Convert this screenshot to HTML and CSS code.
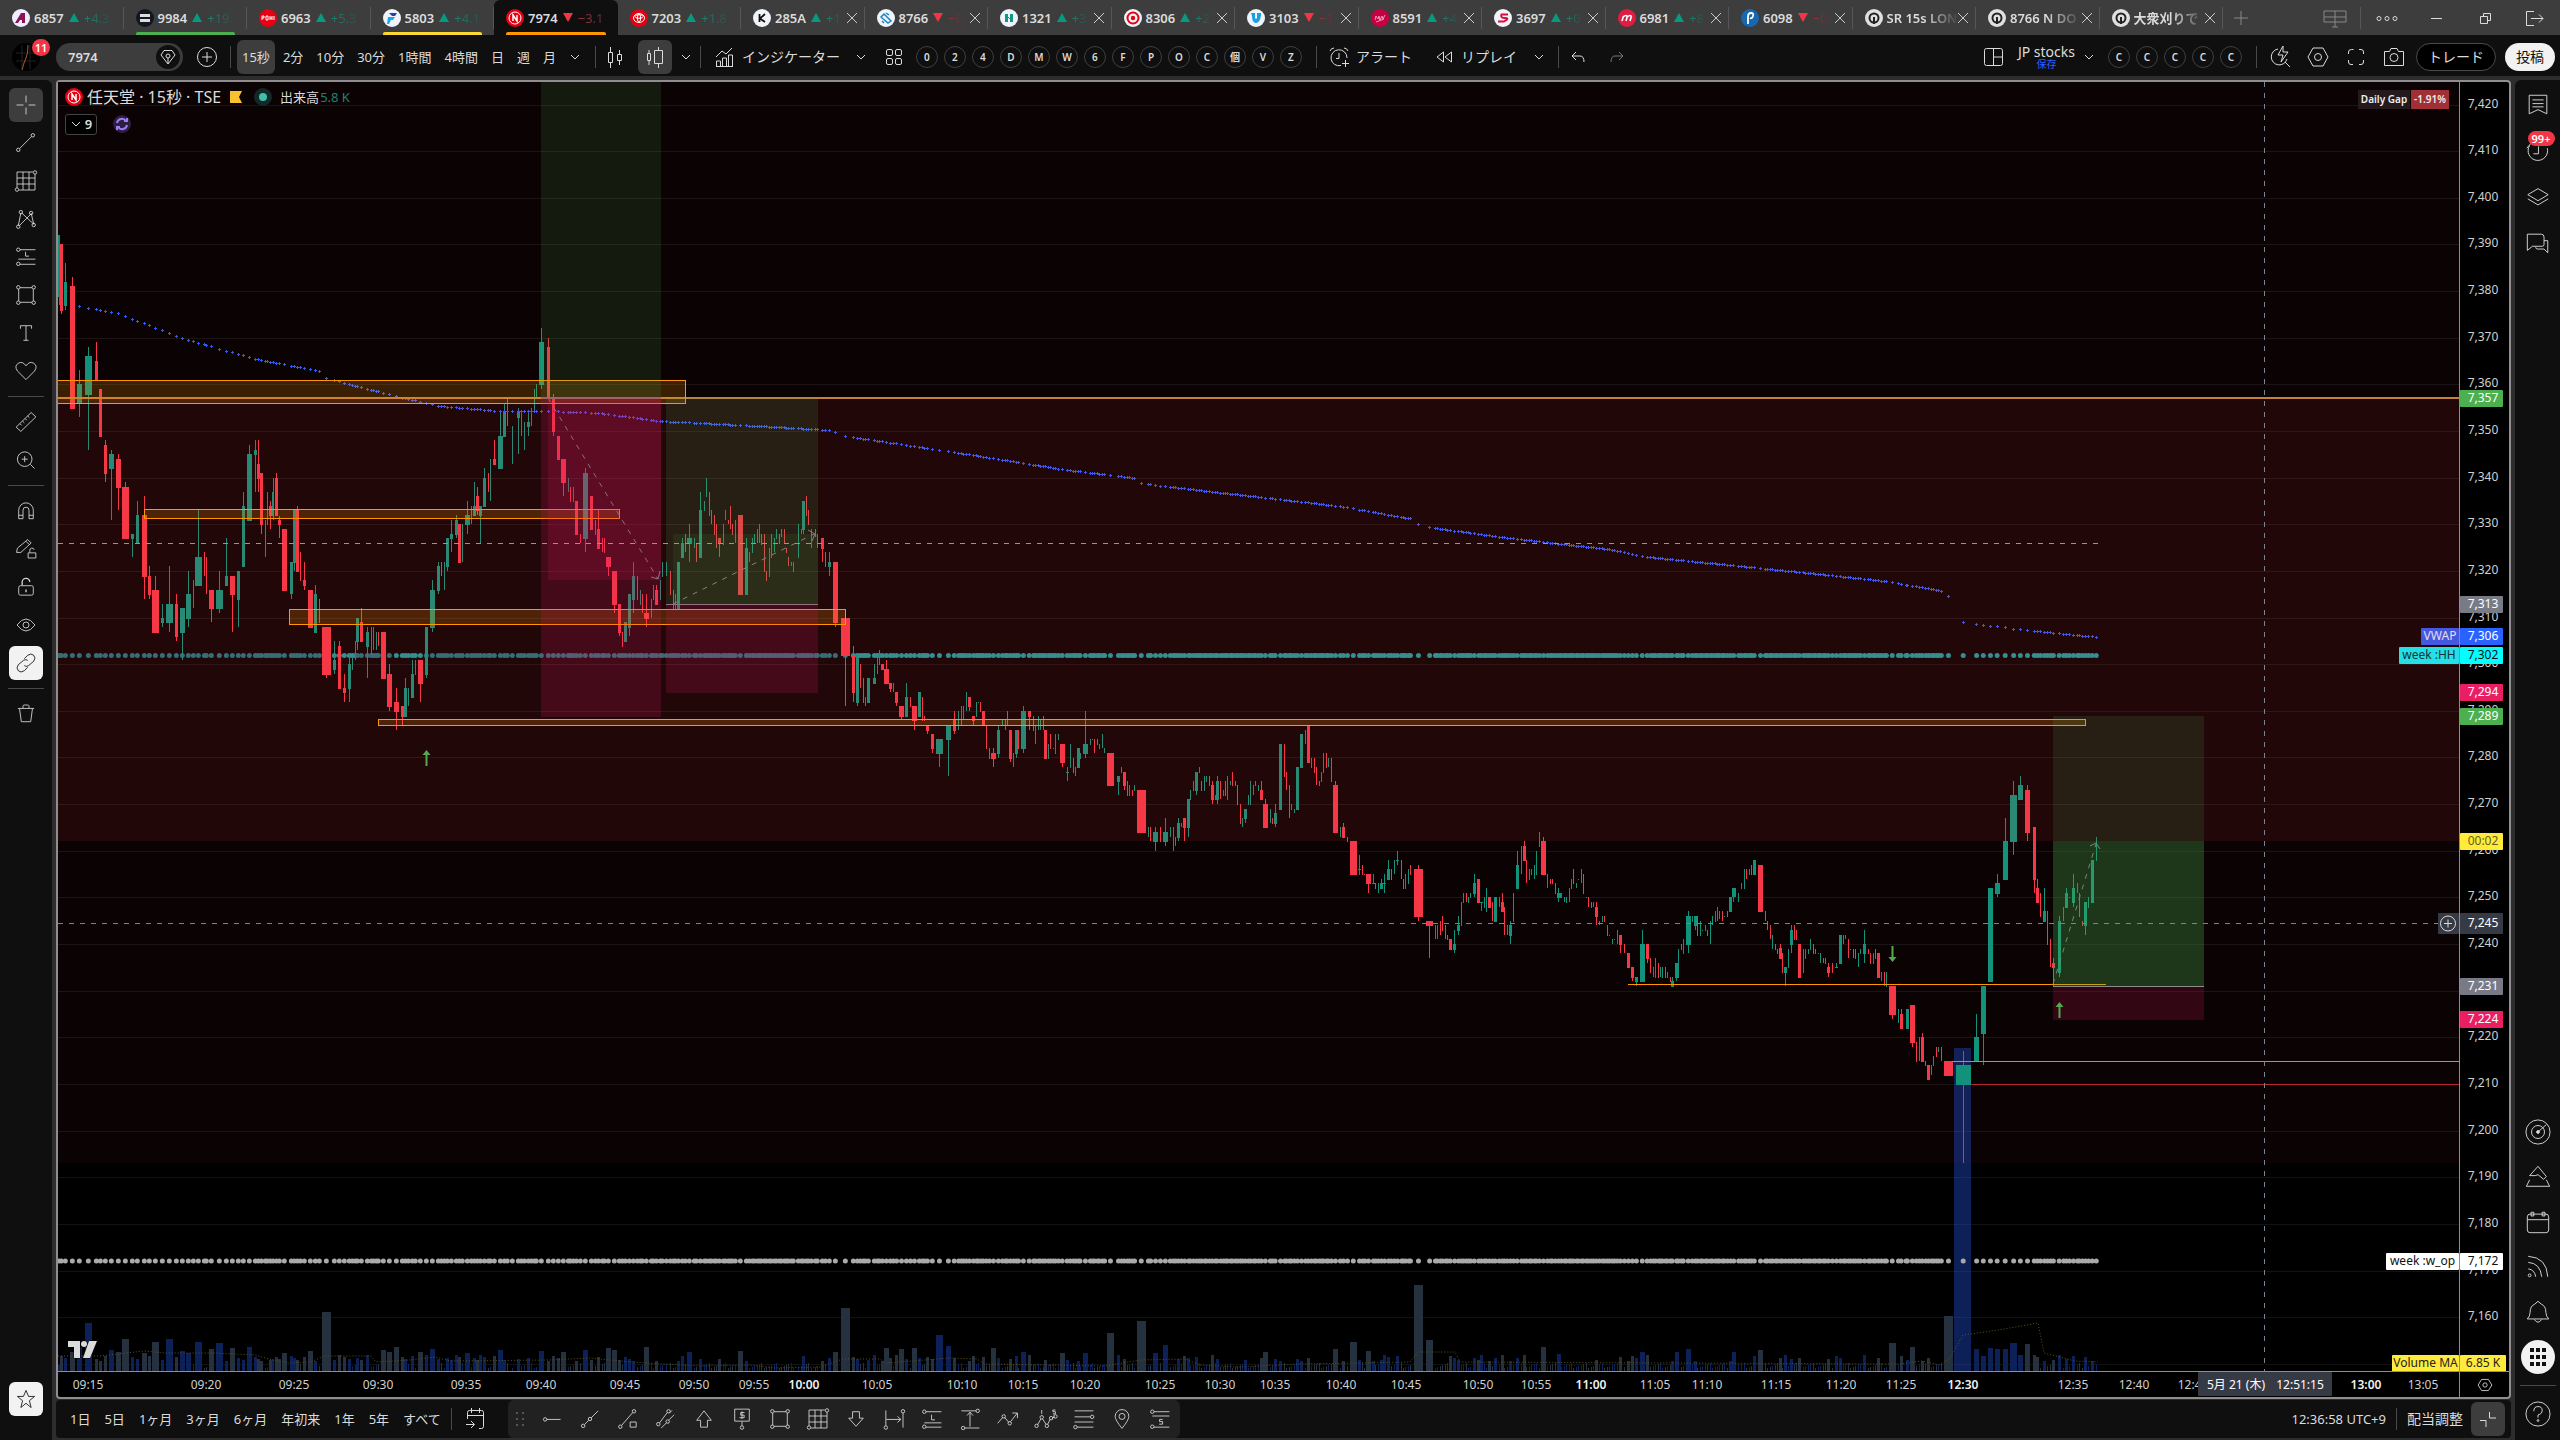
FILE: index.html
```html
<!DOCTYPE html>
<html lang="ja">
<head>
<meta charset="utf-8">
<title>7974 任天堂 15秒</title>
<link rel="stylesheet" href="styles.css">
</head>
<body>
<header class="tabs">
  <nav class="tabstrip">
    <a class="tab" href="#"><span class="logo" style="background:#eef"><svg viewBox="0 0 18 18"><path d="M3 14L9 4h4v10h-3v-3H8l-2 3z" fill="#8a1550"/></svg></span><b>6857</b><i class="up"></i><em class="g">+4.3</em></a>
    <a class="tab mark-green" href="#"><span class="logo dark"><svg viewBox="0 0 18 18"><path d="M4 5h10v3H4zM4 10h10v3H4z" fill="#ddd"/></svg></span><b>9984</b><i class="up"></i><em class="g">+19.</em></a>
    <a class="tab" href="#"><span class="logo red"><svg viewBox="0 0 18 18"><path d="M3 7v4M3 7h2v2H3M7 7h2v4H7zM11 7v4M13 7v4M11 9h2M15 7v4" fill="none" stroke="#fff"/></svg></span><b>6963</b><i class="up"></i><em class="g">+5.3</em></a>
    <a class="tab mark-yellow" href="#"><span class="logo white"><svg viewBox="0 0 18 18"><path d="M6 4h8l-2 3H9z" fill="#1747a6"/><path d="M5 8h7l-2 3H8l-2 4H4z" fill="#1ba7ee"/></svg></span><b>5803</b><i class="up"></i><em class="g">+4.1</em></a>
    <a class="tab active mark-orange" href="#" aria-current="page"><span class="logo red"><svg viewBox="0 0 18 18"><circle cx="9" cy="9" r="6" fill="none" stroke="#fff"/><path d="M7 12V6l4 6V6" fill="none" stroke="#fff" stroke-width="1.5"/></svg></span><b>7974</b><i class="down"></i><em class="r">−3.1</em></a>
    <a class="tab" href="#"><span class="logo red"><svg viewBox="0 0 18 18"><ellipse cx="9" cy="9" rx="5.500" ry="4.500" fill="none" stroke="#fff"/><ellipse cx="9" cy="7.500" rx="4" ry="1.800" fill="none" stroke="#fff"/><ellipse cx="9" cy="9" rx="1.600" ry="4" fill="none" stroke="#fff"/></svg></span><b>7203</b><i class="up"></i><em class="g">+1.8</em></a>
    <a class="tab x" href="#"><span class="logo white"><svg viewBox="0 0 18 18"><path d="M6.500 5v8M12 5L7 9.500 12 13" fill="none" stroke="#111" stroke-width="1.800"/></svg></span><b>285A</b><i class="up"></i><em class="g">+1</em></a>
    <a class="tab x" href="#"><span class="logo white"><svg viewBox="0 0 18 18"><path d="M4 8l3-3 7 7-3 2zM5 12l2 2M9 4l3 2" fill="none" stroke="#178ac9" stroke-width="1.500"/></svg></span><b>8766</b><i class="down"></i><em class="r">−0</em></a>
    <a class="tab x" href="#"><span class="logo white"><svg viewBox="0 0 18 18"><path d="M5 5h3v8H5zM10 5h3v8h-3z" fill="#0a9c83"/><path d="M7 7l4 4" stroke="#0a9c83"/></svg></span><b>1321</b><i class="up"></i><em class="g">+3</em></a>
    <a class="tab x" href="#"><span class="logo white"><svg viewBox="0 0 18 18"><circle cx="9" cy="9" r="5.500" fill="none" stroke="#e60012" stroke-width="2"/><circle cx="9" cy="9" r="2.200" fill="#e60012"/></svg></span><b>8306</b><i class="up"></i><em class="g">+2</em></a>
    <a class="tab x" href="#"><span class="logo white"><svg viewBox="0 0 18 18"><path d="M4 4h4v5q1 2 2 0V4h4v2q-1 8-5 8-4 0-4-7z" fill="#17a0e6"/></svg></span><b>3103</b><i class="down"></i><em class="r">−1</em></a>
    <a class="tab x" href="#"><span class="logo" style="background:#c70044"><svg viewBox="0 0 18 18"><path d="M4 11l1-4 2 3 1-3 1 4 2-4 1 3 2-4M5 13l8-3" fill="none" stroke="#f29ab8"/></svg></span><b>8591</b><i class="up"></i><em class="g">+4</em></a>
    <a class="tab x" href="#"><span class="logo white"><svg viewBox="0 0 18 18"><path d="M14 5.500H7.500Q6 9 11 9t-1 3.500H4" fill="none" stroke="#d9103c" stroke-width="2"/></svg></span><b>3697</b><i class="up"></i><em class="g">+0</em></a>
    <a class="tab x" href="#"><span class="logo" style="background:#e01b44"><svg viewBox="0 0 18 18"><path d="M4 12l1.500-5M8 12l1.500-5M12 12l1.500-5M5 8q4-3 4 0 4-3 4.500 0" fill="none" stroke="#fff" stroke-width="1.600"/></svg></span><b>6981</b><i class="up"></i><em class="g">+8</em></a>
    <a class="tab x" href="#"><span class="logo" style="background:#1668b0"><svg viewBox="0 0 18 18"><path d="M7 15V8q0-4 3-4t2 3-3 2" fill="none" stroke="#fff" stroke-width="1.800"/></svg></span><b>6098</b><i class="down"></i><em class="r">−0</em></a>
    <a class="tab x" href="#"><span class="logo cam"><svg viewBox="0 0 18 18"><circle cx="9" cy="9" r="4.500" fill="none" stroke="#222" stroke-width="2"/><path d="M9 8v7" stroke="#222" stroke-width="2"/></svg></span><b class="long">SR 15s LON</b></a>
    <a class="tab x" href="#"><span class="logo cam"><svg viewBox="0 0 18 18"><circle cx="9" cy="9" r="4.500" fill="none" stroke="#222" stroke-width="2"/><path d="M9 8v7" stroke="#222" stroke-width="2"/></svg></span><b class="long">8766 N DO</b></a>
    <a class="tab x" href="#"><span class="logo cam"><svg viewBox="0 0 18 18"><circle cx="9" cy="9" r="4.500" fill="none" stroke="#222" stroke-width="2"/><path d="M9 8v7" stroke="#222" stroke-width="2"/></svg></span><b class="long">大衆刈りで</b></a>
  </nav>
  <div class="winctl">
    <button aria-label="新しいタブ"><svg viewBox="0 0 24 24"><path d="M12 5v14M5 12h14" stroke="#888"/></svg></button>
    <button class="push" aria-label="レイアウト"><svg viewBox="0 0 24 24"><path d="M1 5h22v11H1zM12 5v16M9 21h6M1 11h22" stroke="#888"/></svg></button>
    <span class="vline"></span>
    <button aria-label="その他"><svg viewBox="0 0 24 24"><circle cx="4" cy="12.500" r="2"/><circle cx="12" cy="12.500" r="2"/><circle cx="20" cy="12.500" r="2"/></svg></button>
    <button aria-label="最小化"><svg viewBox="0 0 24 24"><path d="M7 12.500h11"/></svg></button>
    <button aria-label="元に戻す"><svg viewBox="0 0 24 24"><path d="M7.500 10.500h7v7h-7zM10.500 10V7.500h7v7H15"/></svg></button>
    <button aria-label="閉じる"><svg viewBox="0 0 24 24"><path d="M12 5.500H4.500v14H12M9 12.500h12M17 8.500l4 4-4 4"/></svg></button>
  </div>
</header>

<div class="toolbar">
  <span class="avatar"><svg viewBox="0 0 28 28"><path d="M4 10h20M4 18h20M10 2v24M18 2v24" stroke="#222"/><path d="M10 27q2-8 4-12t2-13" stroke="#b5532a"/></svg><sup>11</sup></span>
  <label class="search"><input type="text" value="7974" aria-label="シンボル"><span class="gem"><svg viewBox="0 0 24 24"><path d="M8 5.500h8l3 4.500-7 9-7-9zM12 13v6"/><circle cx="12" cy="11" r="2"/></svg></span></label>
  <button class="ic add" aria-label="比較"><svg viewBox="0 0 28 28"><circle cx="14" cy="14" r="9.500"/><path d="M14 9v10M9 14h10"/></svg></button>
  <span class="vline"></span>
  <div class="tfs"><button class="on">15秒</button><button>2分</button><button>10分</button><button>30分</button><button>1時間</button><button>4時間</button><button>日</button><button>週</button><button>月</button></div>
  <button class="chev" aria-label="時間足"><svg viewBox="0 0 12 12"><path d="M2 4l4 4 4-4"/></svg></button>
  <span class="vline"></span>
  <button class="ic w38" aria-label="ローソク足"><svg viewBox="0 0 28 28"><path d="M7.500 9.500h4v10h-4zM9.500 4v5M9.500 20v5M16.500 11.500h4v6h-4zM18.500 7v4M18.500 18v4"/></svg></button>
  <button class="ic w34 on" aria-label="出来高ローソク足"><svg viewBox="0 0 28 28"><path d="M6.500 10.500h3v7h-3zM8 7v3M8 18v4M13.500 7.500h8v13h-8zM17.500 4v3M17.500 21v4"/></svg></button>
  <button class="chev w28" aria-label="チャートタイプ"><svg viewBox="0 0 12 12"><path d="M2 4l4 4 4-4"/></svg></button>
  <span class="vline"></span>
  <button class="txt ind"><svg viewBox="0 0 24 24"><path d="M3.500 21v-5h4v5M9.500 21v-8h4v8M15.500 21V10h4v11M3 21.500h17M3 12l6-6 4 3 6-6"/></svg>インジケーター</button>
  <button class="chev w32" aria-label="お気に入り"><svg viewBox="0 0 12 12"><path d="M2 4l4 4 4-4"/></svg></button>
  <button class="ic w34" aria-label="テンプレート"><svg viewBox="0 0 28 28"><rect x="6.500" y="6.500" width="6" height="6" rx="1.500"/><rect x="15.500" y="6.500" width="6" height="6" rx="1.500"/><rect x="6.500" y="15.500" width="6" height="6" rx="1.500"/><rect x="15.500" y="15.500" width="6" height="6" rx="1.500"/></svg></button>
  <div class="rounds"><button>0</button><button>2</button><button>4</button><button>D</button><button>M</button><button>W</button><button>6</button><button>F</button><button>P</button><button>O</button><button>C</button><button>個</button><button>V</button><button>Z</button></div>
  <span class="vline vl2"></span>
  <button class="txt"><svg viewBox="0 0 24 24"><path d="M14 20.500a8 8 0 1 1 6-7.500M12 8v5.500H9M3 6q1-3 4-3M17 3q3 0 4 3M18.500 15v7M15 18.500h7"/></svg>アラート</button>
  <button class="txt replay"><svg viewBox="0 0 24 24"><path d="M11.500 7v10L5 12zM19.500 7v10L13 12z"/></svg>リプレイ</button>
  <button class="chev w32" aria-label="リプレイ設定"><svg viewBox="0 0 12 12"><path d="M2 4l4 4 4-4"/></svg></button>
  <span class="vline"></span>
  <button class="ic w39" aria-label="元に戻す"><svg viewBox="0 0 28 28"><path d="M12 9l-4 4 4 4M8.500 13H16q4 0 4 6"/></svg></button>
  <button class="ic w39 dim" aria-label="やり直し"><svg viewBox="0 0 28 28"><path d="M16 9l4 4-4 4M19.500 13H12q-4 0-4 6"/></svg></button>
  <button class="ic push" aria-label="レイアウト選択"><svg viewBox="0 0 28 28"><rect x="4.500" y="5.500" width="18" height="17" rx="2"/><path d="M13.500 5.500v17M13.500 14h9"/></svg></button>
  <button class="name"><span>JP stocks</span><small>保存</small></button>
  <button class="chev w28" aria-label="レイアウト一覧"><svg viewBox="0 0 12 12"><path d="M2 4l4 4 4-4"/></svg></button>
  <div class="rounds"><button>C</button><button>C</button><button>C</button><button>C</button><button>C</button></div>
  <span class="vline vl2"></span>
  <button class="ic w38" aria-label="クイック検索"><svg viewBox="0 0 28 28"><path d="M12 6a8 8 0 1 0 9 10M19 19l5 5M17 3l-5 9h5l-2 7 7-10h-5z"/></svg></button>
  <button class="ic w38" aria-label="設定"><svg viewBox="0 0 28 28"><path d="M9 5h10l5 9-5 9H9l-5-9z"/><circle cx="14" cy="14" r="3.500"/></svg></button>
  <button class="ic w38" aria-label="全画面"><svg viewBox="0 0 28 28"><path d="M6.500 11V9q0-2.500 3-2.500h2M17 6.500h2q2.500 0 2.500 2.500v2M21.500 17v2q0 2.500-2.500 2.500h-2M11 21.500H9q-2.500 0-2.500-2.500v-2"/></svg></button>
  <button class="ic w38" aria-label="スナップショット"><svg viewBox="0 0 28 28"><path d="M4.500 8.500h5l1.500-3h6l1.500 3h5v14h-19z"/><circle cx="14" cy="14.500" r="4"/></svg></button>
  <button class="pill">トレード</button>
  <button class="pill solid">投稿</button>
</div>

<div class="body">
  <aside class="side left">
    <button class="on" aria-label="十字カーソル"><svg viewBox="0 0 28 28"><path d="M14 3v8M14 17v8M3 14h8M17 14h8"/></svg></button>
    <button aria-label="トレンドライン"><svg viewBox="0 0 28 28"><circle cx="5" cy="22" r="2"/><circle cx="22" cy="5" r="2"/><path d="M6.500 20.500l14-14"/></svg></button>
    <button aria-label="ギャン"><svg viewBox="0 0 28 28"><path d="M3.500 22V3.500H22M24.500 6v18.500H6M10.500 3.500v21M17.500 3.500v21M3.500 10.500h21M3.500 17.500h21"/><circle cx="3.500" cy="24" r="2"/><circle cx="24.500" cy="4" r="2"/></svg></button>
    <button aria-label="パターン"><svg viewBox="0 0 28 28"><path d="M5 22L8 7M9 7l14 13M6 22l14-14M20 7l3 13"/><circle cx="5" cy="23" r="2"/><circle cx="8" cy="6" r="2"/><circle cx="20" cy="7" r="2"/><circle cx="23" cy="21" r="2"/></svg></button>
    <button aria-label="予測"><svg viewBox="0 0 28 28"><path d="M7 5.500h18M5 16.500h20M7 22.500h18M13.500 8v5h4"/><circle cx="5" cy="5.500" r="2"/><circle cx="5" cy="22" r="2"/></svg></button>
    <button aria-label="図形"><svg viewBox="0 0 28 28"><path d="M7 5.500h14M7 22.500h14M5.500 7v14M22.500 7v14"/><circle cx="5" cy="5" r="2"/><circle cx="23" cy="5" r="2"/><circle cx="5" cy="23" r="2"/><circle cx="23" cy="23" r="2"/></svg></button>
    <button aria-label="テキスト"><svg viewBox="0 0 28 28"><path d="M7.500 9V5.500h13V9M14 5.500v17M11 22.500h6"/></svg></button>
    <button aria-label="アイコン"><svg viewBox="0 0 28 28"><path d="M14 24L4 14Q0 8 5 5t9 3q4-6 9-3t1 9z"/></svg></button>
    <hr>
    <button aria-label="計測"><svg viewBox="0 0 28 28"><path d="M2.500 20L20 3l5.500 5L8 25zM7 16l2 2M10 13l2 2M13 10l2 2M16 7l2 2"/></svg></button>
    <button aria-label="ズーム"><svg viewBox="0 0 28 28"><circle cx="12.500" cy="13" r="8.500"/><path d="M19 19l5 5M12.500 9.500v7M9 13h7"/></svg></button>
    <hr>
    <button aria-label="マグネット"><svg viewBox="0 0 28 28"><path d="M5.500 23V13a8.500 8.500 0 0 1 17 0v10h-5V13a3.500 3.500 0 0 0-7 0v10zM5.500 19h5M17.500 19h5"/></svg></button>
    <button aria-label="描画モード維持"><svg viewBox="0 0 28 28"><path d="M3 18l1-5L16 3l4 4L8 18zM14 5l4 4M16.500 18.500h9v6h-9zM18.500 18v-2a2.500 2.500 0 0 1 5-1"/></svg></button>
    <button aria-label="描画をロック"><svg viewBox="0 0 28 28"><rect x="5.500" y="12.500" width="17" height="11" rx="2"/><path d="M9.500 12V9a4.500 4.500 0 0 1 9-1M14 17v3" stroke-width="1.500"/></svg></button>
    <button aria-label="表示切替"><svg viewBox="0 0 28 28"><path d="M3.500 14Q14 0 24.500 14 14 28 3.500 14z"/><circle cx="14" cy="14" r="3.500"/></svg></button>
    <button class="solid" aria-label="同期"><svg viewBox="0 0 28 28"><path d="M12 9l4-4q4-3 7 0t0 7l-6 5q-3 2-5 0M16 19l-4 4q-4 3-7 0t0-7l6-5q3-2 5 0"/></svg></button>
    <hr>
    <button aria-label="削除"><svg viewBox="0 0 28 28"><path d="M4.500 7.500h19M10.500 7V5q0-1.500 1.500-1.500h4q1.500 0 1.500 1.500v2M6.500 8l2 15h11l2-15"/></svg></button>
    <button class="solid star" aria-label="お気に入りツールバー"><svg viewBox="0 0 28 28"><path d="M14 4l3 7h7l-6 5 2 8-6-5-6 5 2-8-6-5h7z"/></svg></button>
  </aside>

  <div class="center">
    <main class="chart">
      <div class="pane">
        <svg id="plot" aria-label="任天堂 15秒足チャート"></svg>
        <div class="legend">
          <div class="row">
            <span class="logo red"><svg viewBox="0 0 18 18"><circle cx="9" cy="9" r="6" fill="none" stroke="#fff"/><path d="M7 12V6l4 6V6" fill="none" stroke="#fff" stroke-width="1.500"/></svg></span>
            <h1>任天堂 · 15秒 · TSE</h1>
            <svg class="flag" viewBox="0 0 12 12"><path d="M0 0h12L9 6l3 6H0z"/></svg>
            <span class="status"></span>
            <span class="vol">出来高<b>5.8 K</b></span>
          </div>
          <div class="row second">
            <button class="count"><svg viewBox="0 0 12 12"><path d="M2 4l4 4 4-4"/></svg>9</button>
            <span class="sync"><svg viewBox="0 0 18 18"><path d="M4 8a5 5 0 0 1 9-2M14 3v3h-3M14 10a5 5 0 0 1-9 2M4 15v-3h3"/></svg></span>
          </div>
        </div>
        <div class="gap"><span>Daily Gap</span><b>-1.91%</b></div>
        <svg class="tv" viewBox="0 0 32 20"><path d="M1 1h12v17H7V7H1z"/><circle cx="17" cy="4" r="3"/><path d="M22 1h8l-7 17h-7z"/></svg>
      </div>
      <svg id="prices" aria-label="価格軸"></svg>
      <svg id="times" aria-label="時間軸"></svg>
      <button class="axisset" aria-label="軸の設定"><svg viewBox="0 0 28 28"><path d="M10 7.500h8l4 6.500-4 6.500h-8L6 14z"/><circle cx="14" cy="14" r="2.500"/></svg></button>
    </main>
    <footer class="bottom">
      <div class="ranges"><button>1日</button><button>5日</button><button>1ヶ月</button><button>3ヶ月</button><button>6ヶ月</button><button>年初来</button><button>1年</button><button>5年</button><button>すべて</button></div>
      <span class="vline"></span>
      <button class="ic goto" aria-label="日付へ移動"><svg viewBox="0 0 28 28"><path d="M5.500 14V7.500q0-2 2-2h12q2 0 2 2v14q0 2-2 2H17M5.500 10.500h16M9.500 3v5M17.500 3v5M4 19.500h8M9 16l3.500 3.500L9 23"/></svg></button>
      <div class="fav">
        <span class="grip"><svg viewBox="0 0 12 20"><path d="M1 4h2M7 4h2M1 10h2M7 10h2M1 16h2M7 16h2" stroke="#555" stroke-width="2"/></svg></span>
        <button aria-label="水平レイ"><svg viewBox="0 0 28 28"><circle cx="6" cy="14.500" r="2"/><path d="M8 14.500h16"/></svg></button>
        <button aria-label="レイ"><svg viewBox="0 0 28 28"><circle cx="6" cy="22" r="2"/><circle cx="14" cy="14" r="2"/><path d="M7.500 20.500l5-5M15.500 12.500l8-8"/></svg></button>
        <button aria-label="情報ライン"><svg viewBox="0 0 28 28"><circle cx="5" cy="23" r="2"/><circle cx="21" cy="5" r="2"/><path d="M6.500 21.500l13-15M16.500 17.500h7v6h-7z"/></svg></button>
        <button aria-label="平行チャネル"><svg viewBox="0 0 28 28"><circle cx="5" cy="20" r="2"/><circle cx="17" cy="5" r="2"/><circle cx="16" cy="17" r="2"/><path d="M6.500 18.500l9-12M17.500 15l6-6M14.500 18.500l-6 6M18 7l3-3"/></svg></button>
        <button aria-label="上向き矢印"><svg viewBox="0 0 28 28"><path d="M14 4.500l8.500 11H18v8h-8v-8H5.500z"/></svg></button>
        <button aria-label="価格ノート"><svg viewBox="0 0 28 28"><path d="M5.500 2.500h17v14h-17zM14 17v5M17 6.500h-4.500v3h4v3H11M14 5v9"/><circle cx="14" cy="24" r="2"/></svg></button>
        <button aria-label="長方形"><svg viewBox="0 0 28 28"><path d="M7 5.500h14M7 22.500h14M5.500 7v14M22.500 7v14"/><circle cx="5" cy="5" r="2"/><circle cx="23" cy="5" r="2"/><circle cx="5" cy="23" r="2"/><circle cx="23" cy="23" r="2"/></svg></button>
        <button aria-label="ギャンボックス"><svg viewBox="0 0 28 28"><path d="M3.500 22V3.500H22M24.500 6v18.500H6M10.500 3.500v21M17.500 3.500v21M3.500 10.500h21M3.500 17.500h21"/><circle cx="3.500" cy="24" r="2"/><circle cx="24.500" cy="4" r="2"/></svg></button>
        <button aria-label="下向き矢印"><svg viewBox="0 0 28 28"><path d="M14 22.500L22.500 13H18V5.500h-8V13H5.500z"/></svg></button>
        <button aria-label="日付範囲"><svg viewBox="0 0 28 28"><path d="M4.500 4v18M24.500 7v17M5 14.500h17M18 11l4 3.500-4 3.500"/><circle cx="4.500" cy="24" r="2"/><circle cx="24.500" cy="5" r="2"/></svg></button>
        <button aria-label="ロングポジション"><svg viewBox="0 0 28 28"><path d="M7 5.500h18M5 18.500h20M7 23.500h18M13.500 9v6h4"/><circle cx="5" cy="5.500" r="2"/><circle cx="5" cy="23" r="2"/></svg></button>
        <button aria-label="価格範囲"><svg viewBox="0 0 28 28"><path d="M4 4.500h17M8 24.500h17M14 23V6M10.500 10L14 6l3.500 4"/><circle cx="23" cy="4.500" r="2"/><circle cx="6" cy="24.500" r="2"/></svg></button>
        <button aria-label="パス"><svg viewBox="0 0 28 28"><path d="M2 19l6-7M10 12l5 6M17 17l8-10M19 7h6v6"/><circle cx="9" cy="11" r="2"/><circle cx="16" cy="19" r="2"/></svg></button>
        <button aria-label="エリオット波動"><svg viewBox="0 0 28 28"><path d="M4 21l4-7M10 14l4 6M16 20l3-6M21 14l3-3M9 3.500V8M22 3.500h3M22 3.500v2h3V8h-3"/><circle cx="3" cy="22" r="2"/><circle cx="9" cy="12" r="2"/><circle cx="15" cy="22" r="2"/><circle cx="20" cy="13" r="2"/><circle cx="25" cy="11" r="2"/></svg></button>
        <button aria-label="フィボナッチ"><svg viewBox="0 0 28 28"><path d="M3 4.500h22M3 11.500h18M3 17.500h22M6 23.500h19"/><circle cx="23.500" cy="11.500" r="2"/><circle cx="4" cy="23.500" r="2"/></svg></button>
        <button aria-label="ピン"><svg viewBox="0 0 28 28"><path d="M14 25Q6 15 6 11a8 8 0 0 1 16 0q0 4-8 14z"/><circle cx="14" cy="11" r="3.500"/></svg></button>
        <button aria-label="ショートポジション"><svg viewBox="0 0 28 28"><path d="M7 5.500h18M5 10.500h20M7 23.500h18M17 14.500h-3.500v2.500H17v3h-4"/><circle cx="5" cy="5.500" r="2"/><circle cx="5" cy="23" r="2"/></svg></button>
      </div>
      <span class="clock">12:36:58 UTC+9</span>
      <span class="vline"></span>
      <button class="adj">配当調整</button>
      <button class="ic on shrink" aria-label="縮小"><svg viewBox="0 0 28 28"><path d="M15.500 7v6H22M6 15.500h6V22"/></svg></button>
    </footer>
  </div>

  <aside class="side right">
    <button aria-label="ウォッチリスト"><svg viewBox="0 0 28 28"><path d="M4.500 3.500h19v20L14 19l-9.500 4.500zM8 8.500h12M8 12.500h12M8 16h12"/></svg></button>
    <button aria-label="アラート"><svg viewBox="0 0 28 28"><path d="M5 8a10.500 10.500 0 1 0 19 3M2 11l5-6M14.500 9v8H9"/></svg><sup>99+</sup></button>
    <button aria-label="オブジェクトツリー"><svg viewBox="0 0 28 28"><path d="M14 5l11 6.500L14 18 3 11.500zM3 16l11 6.500L25 16"/></svg></button>
    <button aria-label="チャット"><svg viewBox="0 0 28 28"><path d="M2.500 22V4.500h15q3 0 3 3v8q0 2-2 2H8zM20.500 11.500h4v13l-4-4h-7q-2 0-2-2"/></svg></button>
    <button class="first" aria-label="スクリーナー"><svg viewBox="0 0 28 28"><circle cx="14" cy="14" r="13"/><circle cx="14" cy="14" r="7"/><circle cx="14" cy="14" r="1.500" fill="#ddd"/><path d="M14 14l9-8"/></svg></button>
    <button aria-label="パイン"><svg viewBox="0 0 28 28"><path d="M14 2.500l9 11-3 3-6-5-3 1H5zM5 17l-3.500 7h25L23 17"/></svg></button>
    <button aria-label="カレンダー"><svg viewBox="0 0 28 28"><rect x="2.500" y="5.500" width="23" height="20" rx="3"/><path d="M2.500 11.500h23M6.500 3.500h3v4h-3zM18.500 3.500h3v4h-3z"/></svg></button>
    <button aria-label="ストリーム"><svg viewBox="0 0 28 28"><path d="M3.500 2.500q20 1 21 22M3.500 9q13 1 14.500 15.500M3.500 16q7 1 8 8.500"/><circle cx="5" cy="23" r="1.500"/></svg></button>
    <button aria-label="通知"><svg viewBox="0 0 28 28"><path d="M2.500 21.500q3-3 3-7 0-7 5-9l3.500-3 3.500 3q5 2 5 9 0 4 3 7zM10 22q4 6 8 0"/></svg></button>
    <button class="apps" aria-label="アプリ"><svg viewBox="0 0 34 34"><path d="M9 10h4M15 10h4M21 10h4M9 17h4M15 17h4M21 17h4M9 24h4M15 24h4M21 24h4" stroke="#111" stroke-width="4"/></svg></button>
    <hr>
    <button aria-label="ヘルプ"><svg viewBox="0 0 28 28"><circle cx="14" cy="14" r="13"/><path d="M9.500 11q0-5 4.500-5t4.500 4-4.500 5v3"/><circle cx="14" cy="21" r="1"/></svg></button>
  </aside>
</div>
<script src="chart.js"></script>
</body>
</html>
```
FILE: styles.css
```css
* { box-sizing: border-box; }
html, body { height: 100%; }
body {
  margin: 0; min-height: 100vh; display: flex; flex-direction: column;
  background: #2d2d2d; color: #dbdbdb; overflow: hidden;
  font: 13px/16px "Noto Sans", "Noto Sans CJK JP", sans-serif;
}
button { font: inherit; color: inherit; background: none; border: 0; padding: 0; margin: 0; display: flex; align-items: center; justify-content: center; flex: none; }
svg { display: block; }
button svg, .gem svg, .avatar svg { fill: none; stroke: #dbdbdb; stroke-width: 1; flex: none; }
.vline { width: 1px; height: 22px; background: #4a4a4a; flex: none; }
.push { margin-left: auto; }

/* window tabs */
.tabs { display: flex; height: 35px; background: #3d3d3d; flex: none; }
.tabstrip { flex: 1; display: flex; min-width: 0; }
.tab { flex: 1 1 0; min-width: 0; position: relative; display: flex; align-items: center; padding-left: 12px; color: #dbdbdb; text-decoration: none; overflow: hidden; white-space: nowrap; }
.tab::before { content: ""; position: absolute; right: 0; top: 7px; height: 22px; width: 1px; background: #575757; }
.tab::after { content: ""; position: absolute; left: 12px; right: 12px; bottom: 0; height: 3px; border-radius: 2px 2px 0 0; }
.mark-green::after { background: #4caf50; }
.mark-yellow::after { background: #fdd835; }
.mark-orange::after { background: #ff9800; }
.tab.active { background: #0f0f0f; border-radius: 6px 6px 0 0; }
.tab.active::before { display: none; }
.tab b { margin-left: 4px; font-weight: 600; }
.tab .long { width: 72px; overflow: hidden; -webkit-mask-image: linear-gradient(90deg, #000 50%, transparent); mask-image: linear-gradient(90deg, #000 50%, transparent); }
.tab em { font-style: normal; margin-left: 5px; width: 30px; overflow: hidden; }
.tab.x em { width: 16px; }
.tab em.g { color: transparent; background: linear-gradient(90deg, #1b8471, #37443f); -webkit-background-clip: text; background-clip: text; }
.tab em.r { color: transparent; background: linear-gradient(90deg, #a8323c, #4a3035); -webkit-background-clip: text; background-clip: text; }
.up, .down { margin-left: 5px; border: 5px solid transparent; border-top: 0; border-bottom: 9px solid #089981; }
.down { border-bottom: 0; border-top: 9px solid #f23645; }
.tab.x { background: linear-gradient(45deg, transparent 46%, #ccc 47%, #ccc 53%, transparent 54%) right 8px center / 10px 10px no-repeat, linear-gradient(-45deg, transparent 46%, #ccc 47%, #ccc 53%, transparent 54%) right 8px center / 10px 10px no-repeat; }
.logo { width: 18px; height: 18px; border-radius: 50%; overflow: hidden; flex: none; }
.logo.white { background: #f0f3fa; }
.logo.dark { background: #131722; }
.logo.red { background: #e60012; }
.logo.cam { background: #e0e0e0; }
.winctl { width: 337px; display: flex; align-items: center; padding: 0 14px 0 6px; }
.winctl button { width: 24px; margin-right: 25px; }
.winctl button:last-child { margin-right: 0; }
.winctl .push { margin-left: auto; margin-right: 13px; }
.winctl .vline { margin-right: 14px; background: #575757; }
.winctl svg { width: 24px; height: 24px; }

/* top toolbar */
.toolbar { display: flex; align-items: center; height: 41px; padding: 3px 5px 0 12px; background: #0f0f0f; flex: none; white-space: nowrap; }
.ic { width: 28px; height: 34px; border-radius: 6px; }
.ic svg { width: 28px; height: 28px; }
.on { background: #3d3d3d; border-radius: 6px; }
.w28 { width: 28px; } .w32 { width: 32px; } .w34 { width: 34px; } .w38 { width: 38px; } .w39 { width: 39px; }
.toolbar .w38 + .w34 { margin-left: 4px; }
.dim { opacity: .5; }
.avatar { position: relative; width: 28px; height: 28px; border-radius: 50%; background: #000; flex: none; }
sup { position: absolute; background: #f23645; color: #fff; border-radius: 9px; font: 600 11px/17px "Noto Sans", sans-serif; text-align: center; }
.avatar sup { left: 20px; top: -4px; width: 18px; }
.search { width: 127px; height: 28px; margin-left: 16px; border-radius: 14px; background: #3d3d3d; display: flex; align-items: center; padding: 0 2px 0 12px; flex: none; }
.search input { width: 88px; border: 0; background: none; color: #dbdbdb; font: 600 13px "Noto Sans", sans-serif; padding: 0; }
.gem { width: 24px; height: 24px; border-radius: 50%; background: #0f0f0f; }
.add { margin: 0 9px 0 10px; }
.tfs { display: flex; gap: 3px; margin-left: 6px; }
.tfs button { height: 34px; padding: 0 5px; }
.chev svg, .count svg { width: 12px; height: 12px; fill: none; stroke: #dbdbdb; }
.chev { height: 34px; }
.tfs + .chev { width: 28px; margin-right: 6px; }
.toolbar > .txt { gap: 5px; height: 34px; padding-left: 12px; font-size: 14px; }
.toolbar > .ind { padding-right: 5px; }
.txt svg { width: 24px; height: 24px; }
.toolbar > .replay { padding: 0 6px 0 20px; }
.replay + .chev { margin-right: 3px; }
.rounds { display: flex; gap: 6px; margin-left: 5px; }
.rounds button { width: 22px; height: 22px; border: 1px solid #3f3f3f; border-radius: 50%; font-size: 10px; font-weight: 600; }
.vl2 { margin-left: 14px; margin-right: 4px; }
.toolbar > .vl2 + .txt { padding-left: 6px; }
.name { flex-direction: column; margin-left: 10px; font-size: 14px; }
.name span { line-height: 14px; }
.name small { font-size: 10px; line-height: 11px; color: #2962ff; }
.pill { height: 28px; border: 1px solid #4a4a4a; border-radius: 14px; background: #000; padding: 0 11px; margin-left: 3px; font-size: 14px; }
.pill.solid { background: #f2f2f2; color: #0f0f0f; margin-left: 9px; border: 0; }

/* body */
.body { flex: 1; display: flex; gap: 4px; min-height: 0; padding-top: 4px; }
.side { display: flex; flex-direction: column; align-items: center; background: #0f0f0f; flex: none; }
.side hr { width: 36px; height: 1px; border: 0; background: #4a4a4a; margin: 4px 0; flex: none; }
.side button { position: relative; }
.left { width: 52px; padding: 8px 0 24px; gap: 4px; border-radius: 0 6px 0 0; }
.left button { width: 34px; height: 34px; border-radius: 6px; }
.left svg { width: 24px; height: 24px; }
.left .solid { background: #f2f2f2; }
.left .solid svg { stroke: #111; }
.left .star { margin-top: auto; }
.right { width: 45px; padding: 8px 0 9px; gap: 12px; border-radius: 6px 0 0 0; }
.right button { width: 34px; height: 34px; }
.right svg { width: 26px; height: 26px; }
.right .first { margin-top: auto; }
.right .first ~ * { margin-top: -1px; }
.right hr { margin: 0; }
.right sup { left: 7px; top: -3px; width: 27px; line-height: 15px; }
.right .apps { background: #f2f2f2; border-radius: 50%; }
.right .apps svg { width: 34px; height: 34px; }
.center { flex: 1; min-width: 0; display: flex; flex-direction: column; gap: 1px; padding-bottom: 2px; }

/* chart */
.chart { flex: 1; min-height: 0; display: grid; grid-template-columns: 1fr 50px; grid-template-rows: 1fr 26px; border: 2px solid #8f8d8f; border-radius: 4px; background: #000; }
.pane { position: relative; overflow: hidden; min-height: 0; }
.pane > svg, #prices, #times { width: 100%; height: 100%; }
#prices { border-left: 1px solid #8f8d8f; min-height: 0; }
#times, .axisset { border-top: 1px solid #8f8d8f; min-width: 0; }
.axisset { border-left: 1px solid #8f8d8f; }
.axisset svg { width: 24px; height: 24px; }
.chart text { font-size: 12px; fill: #d0d0d0; text-anchor: middle; }
.legend { position: absolute; left: 7px; top: 4px; }
.row { display: flex; align-items: center; height: 22px; }
.row h1 { font-size: 16px; font-weight: 400; margin: 0 9px 0 4px; line-height: 22px; }
.flag { width: 12px; height: 12px; fill: #fbc02d; }
.status { width: 18px; height: 18px; border-radius: 50%; background: #42bda8; border: 5px solid #122a27; margin: 0 8px 0 12px; }
.vol b { font-weight: 400; color: #1c8574; margin-left: 1px; }
.second { height: 32px; }
.count { width: 32px; height: 21px; border: 1px solid #444; border-radius: 3px; background: #000; gap: 3px; font-weight: 600; }
.sync { width: 18px; height: 18px; border-radius: 50%; background: #2c1f42; margin-left: 16px; }
.sync svg { fill: none; stroke: #a07af0; stroke-width: 2; }
.gap { position: absolute; right: 10px; top: 8px; display: flex; gap: 1px; font: 600 10px/19px "Noto Sans", sans-serif; color: #eee; text-align: center; }
.gap span { width: 52px; background: #241a1e; }
.gap b { width: 38px; background: #a03035; font-weight: 600; }
.pane .tv { position: absolute; left: 9px; bottom: 11px; width: 32px; height: 20px; fill: #dbdbdb; stroke: #000; paint-order: stroke; }

/* bottom toolbar */
.bottom { display: flex; align-items: center; height: 38px; background: #0f0f0f; border-radius: 4px; flex: none; padding-right: 6px; }
.ranges { display: flex; gap: 14px; margin: 0 10px 0 14px; }
.goto { margin: 0 18px 0 10px; }
.fav { display: flex; align-items: center; height: 38px; background: #212121; border-radius: 6px; padding: 0 1px 0 7px; }
.grip { width: 18px; }
.fav button { width: 38px; height: 34px; }
.fav svg { width: 24px; height: 24px; }
.fav .grip svg { width: 12px; height: 20px; }
.clock { margin-left: auto; margin-right: 10px; }
.adj { margin: 0 8px 0 10px; font-size: 14px; }
.shrink { width: 34px; }
```
FILE: chart.js
```js
// Candles: direction + centre x, then either top,bottom (one-pixel bar)
// or width, wick top, body top, body bottom, wick bottom, in the segment's own units.
const segments = [
  { x: 0, y: 80, sx: 3, sy: 2.306, bars: `u177,5,357,357,500,520 d184,9,378,378,533,540 u196,9,422,466,521,530 d217,15,454,475,759,759 u238,15,669,701,746,777 u265,21,616,636,726,853 d289,9,604,648,693,693 d301,9,713,713,823,823 d316,9,830,842,909,927 u334,15,853,862,897,1015 d355,15,862,874,941,992 d376,21,927,938,1058,1058 u397,9,1047,1047,1058,1100 u412,9,971,1003,1070,1070 d433,15,959,1003,1146,1197 d448,9,1121,1144,1188,1197 d466,21,1144,1176,1275,1275 u487,9,1208,1241,1252,1261 u508,21,1121,1208,1252,1273 d529,9,1185,1208,1284,1294 u547,15,1217,1217,1275,1337 u565,15,1132,1185,1243,1261 u580,1153,1218 u595,21,992,1100,1167,1167 d613,1088,1144 d619,1100,1185 d634,15,1176,1176,1220,1250 u658,21,1132,1176,1220,1229 u679,9,1056,1144,1167,1167 d697,15,1144,1144,1188,1273 u715,9,1132,1132,1199,1261 u730,9,950,982,1123,1123 u748,15,842,862,1017,1017 u766,9,830,853,865,950 d775,9,830,885,920,950 d784,9,906,906,1026,1047 u796,1015,1100 u802,950,1026 d811,9,971,982,1005,1036 u819,5,918,950,1005,1015 d829,9,906,918,1005,1005 d838,9,1005,1015,1026,1056 d853,15,1035,1035,1178,1178 u874,9,1111,1111,1185,1197 u883,9,990,990,1114,1132 d892,9,982,990,1134,1134 d901,1088,1155 d913,9,1111,1153,1167,1176 d931,15,1176,1176,1264,1264 u946,9,1164,1185,1275,1275 d958,1197,1252 d979,27,1261,1261,1372,1380 u1003,9,1294,1337,1360,1370 d1018,9,1294,1305,1404,1404 d1033,9,1370,1402,1414,1434 u1048,9,1326,1347,1404,1434 u1057,1330,1360 u1066,1294,1337 u1072,9,1241,1241,1296,1315 d1084,9,1218,1250,1296,1296 u1102,9,1261,1273,1307,1379 u1114,1261,1326 u1121,1261,1315 u1129,1273,1315 d1135,1273,1305 d1150,15,1273,1273,1381,1381 d1168,15,1347,1370,1446,1455 d1189,15,1402,1434,1457,1499 d1207,9,1443,1443,1469,1488 u1216,9,1379,1402,1469,1469 u1225,1402,1443 u1237,9,1337,1370,1425,1425 u1246,1337,1372 d1261,15,1337,1337,1393,1434 u1279,9,1261,1261,1372,1379 u1297,15,1153,1176,1264,1273 u1315,9,1111,1121,1178,1185` },
  { x: 440, y: 300, sx: 3, sy: 3, bars: `d4,786,828 u13,786,870 u22,9,714,714,801,813 u34,9,660,702,717,756 u49,9,645,660,705,714 d58,9,672,672,789,789 u67,672,786 u82,15,603,645,675,702 u94,618,672 u103,9,546,618,648,648 d112,9,561,588,633,645 u121,9,618,618,648,729 u133,9,504,534,621,621 d145,519,576 u151,477,603 d163,9,420,477,495,495 u181,15,333,408,507,507 u193,9,312,333,411,411 d202,294,378 u217,378,492 u235,9,324,333,354,462 u244,333,408 u253,366,450 u265,9,333,366,381,408 u274,324,378 u283,267,333 u289,252,294 u304,15,84,126,255,267 d325,9,114,141,297,297 d340,9,282,294,396,408 d355,9,408,408,480,480 d370,15,477,477,549,588 u385,534,576 d391,561,606 u400,561,606 d409,9,603,603,705,705 d421,702,729 u436,15,504,519,717,756 d454,9,588,588,690,690 d466,660,705 d475,9,630,687,747,747 d487,714,756 d493,714,759 d505,15,771,771,801,828 d523,15,813,813,915,939 d538,9,912,912,999,1008 d547,996,1041 u556,9,966,966,1026,1026 u568,9,882,882,984,1008 u580,9,786,828,900,939 d592,828,900 u601,870,915 d607,882,939 d619,15,882,939,957,981 u634,897,954 u640,855,900 d649,9,855,870,915,915 u661,840,900 u667,786,831 u679,786,828 d691,813,885 d700,870,927 u706,882,927 u715,9,786,786,927,927 u727,9,714,729,774,774 d736,702,756 u748,15,672,714,732,786 u763,714,744 d769,729,786 u781,9,576,630,774,774 u793,603,633 u799,534,591 d808,576,648 d814,630,672 d823,645,705 d829,672,744 d838,9,714,714,732,771 u850,672,735 u856,630,660 d865,660,672 d871,618,687 d877,672,705 u886,660,729 d901,15,645,645,885,885 u919,9,714,744,885,885 u928,756,786 u937,714,759 u943,702,729 u952,687,729 u958,672,729 d964,702,735 d973,702,816 d979,813,843 u988,744,831 u994,702,774 u1003,714,756 u1009,687,717 d1018,702,732 d1024,687,711 d1033,687,732 d1039,744,759 d1045,771,798 u1054,786,798 u1060,786,816 u1075,672,774 u1084,687,702 u1090,9,603,603,690,702 d1099,588,648 d1105,630,675 u1114,687,744 d1126,687,711 u1132,702,744 d1147,9,714,714,747,786 d1156,756,801 u1168,9,756,786,801,828 d1186,15,786,786,969,981 d1216,27,954,954,1068,1218 d1240,9,1038,1065,1179,1206 u1252,9,1065,1065,1209,1218 d1261,1092,1164 d1270,1134,1209 u1276,1191,1218 u1285,9,1134,1134,1209,1209 u1303,9,1092,1134,1152,1152 u1312,1062,1122 u1318,1050,1095 d1327,9,1092,1092,1110,1110 d1339,15,1080,1107,1152,1152 d1351,9,1149,1149,1167,1176 u1360,1149,1176` },
  { x: 860, y: 600, sx: 2.24, sy: 3, bars: `d82,7,276,276,309,318 d93,12,318,318,351,357 u104,7,249,291,351,351 d113,291,321 d122,12,318,318,363,390 u133,7,276,276,351,351 d140,291,363 d145,348,363 d151,7,378,378,393,402 d162,7,402,402,447,459 u178,16,417,417,462,501 u198,11,378,378,420,528 d211,7,333,357,393,402 u221,333,390 u227,318,375 u232,318,357 u238,276,333 d245,7,291,291,321,333 d254,7,348,348,363,375 u261,306,351 u265,306,309 d271,306,336 d276,7,333,333,375,375 d283,378,447 d290,444,477 d299,12,444,459,477,501 u310,7,378,390,462,474 u319,357,378 u326,357,390 d330,333,375 d337,7,390,390,477,486 u344,459,501 u350,7,390,390,462,474 d355,390,447 u366,11,318,333,447,459 d379,7,333,333,351,390 d389,348,393 u393,378,432 u400,348,390 u404,357,390 d410,348,390 d415,7,390,390,477,477 u422,432,477 d427,402,447 u433,444,447 u438,402,462 u445,402,420 d453,11,432,432,489,501 u464,7,501,516,519,543 u471,432,504 d478,474,519 u483,501,528 u489,7,444,444,504,504 u493,459,477 u505,11,333,432,462,474 u516,417,435 u521,417,420 d525,417,459 d532,417,435 u536,432,447 u543,402,444 u548,444,459 d561,16,459,459,558,558 u579,6,528,528,546,585 u586,501,519 d592,7,516,516,558,570 d599,543,588 u604,555,588 d610,570,588 u615,555,573 d630,21,570,570,699,699 u646,681,711 d651,681,723 u662,12,681,696,726,753 d673,681,726 u684,11,654,696,726,738 u695,681,711 u702,681,753 u707,711,738 u713,7,654,669,714,723 u720,669,681 d727,6,654,654,684,723 u736,7,597,597,684,711 u740,570,600 u747,543,573 u754,7,516,516,573,585 u760,501,519 d765,543,573 u772,528,573 u776,528,546 d783,528,558 d789,7,543,555,600,612 u796,585,600 u800,7,528,543,600,612 d808,543,597 u814,570,588 d819,543,588 u823,528,600 u830,543,555 d834,516,558 d841,543,558 d846,555,615 d852,612,672 u857,654,681 u863,7,627,627,657,669 u870,585,615 u875,543,615 u882,555,585 u886,543,558 u893,555,573 d899,7,543,570,600,600 d908,11,597,612,684,684 u919,627,669 d924,654,672 u930,7,612,639,672,681 u942,6,432,432,630,630 d951,432,531 d955,516,570 d962,555,654 u966,612,630 u973,627,639 u980,6,501,501,630,630 u989,6,402,402,504,504 u998,390,432 d1004,7,378,378,489,489 u1011,474,504 d1018,474,519 d1022,501,555 d1029,543,558 u1034,516,546 u1038,459,519 d1045,459,504 u1049,474,501 d1056,474,546 d1065,11,543,555,699,699 u1076,681,711 d1083,6,669,681,714,714 d1092,711,726 d1105,15,723,723,825,825 u1119,6,765,807,810,825 d1126,795,825 d1131,822,825 d1139,12,822,822,852,879 u1150,6,822,849,852,852 d1155,849,867 u1161,849,879 u1168,7,837,849,867,867 u1175,6,822,849,852,879 u1184,7,780,807,840,840 d1190,807,840 u1197,780,822 u1204,6,753,780,783,795 d1213,780,837 d1217,837,867 u1222,822,867 u1229,807,852 d1233,795,825 d1251,20,795,807,951,963 d1276,16,963,963,978,1074 u1289,975,1017 u1293,975,1017 d1300,963,1005 d1305,948,993 d1312,975,1017 d1316,1005,1020 d1322,7,1017,1017,1050,1050 u1332,6,990,1032,1050,1059 u1341,7,948,975,993,1005 u1347,906,978 u1352,879,909 d1358,879,906 u1363,891,909 u1368,879,894 u1376,7,822,849,882,891 d1386,7,837,837,909,909 u1392,7,906,906,909,933 u1399,891,924 u1403,864,936 d1410,6,891,891,924,924 d1417,906,963 u1423,7,891,891,966,966 u1432,891,921 d1439,7,879,906,936,936 d1444,921,1005 u1450,975,1005 u1457,6,963,975,1008,1032 u1464,879,966 u1472,7,753,795,867,867 u1482,738,822 d1488,7,723,738,783,783 d1493,780,849 u1500,807,840 u1504,807,825 u1511,795,837 u1515,753,825 u1522,696,741 d1531,12,711,723,825,825 u1540,822,864 d1547,837,852 d1551,837,852 d1558,849,882 u1565,9,864,879,894,906` },
  { x: 1540, y: 700, sx: 2.24, sy: 3, bars: `u48,579,594 u55,591,606 u59,591,609 u66,564,606 u70,537,567 d75,507,552 u82,549,564 u86,537,540 u93,507,549 d97,522,582 d104,591,594 d109,591,621 d115,606,624 u120,606,621 d126,7,606,621,651,675 u133,663,675 u140,648,666 d145,648,666 d151,675,708 u156,705,708 u162,717,732 u167,717,720 u173,690,732 d180,7,705,705,735,759 d189,732,759 d198,7,759,759,804,804 d207,7,801,801,834,843 u216,7,831,831,846,858 u229,11,690,732,846,846 d240,7,732,732,777,789 d248,774,819 u254,801,831 u259,774,834 d266,789,834 u270,801,831 u274,801,834 d281,801,834 u285,816,834 d292,831,846 u296,7,831,843,861,861 u306,8,789,789,834,843 u310,747,819 d317,732,750 u321,717,762 u332,11,633,648,735,759 u341,648,666 u348,7,648,648,678,690 d353,648,708 u360,663,708 u364,690,693 u371,675,693 d375,690,708 u382,663,732 u386,648,675 u393,633,666 u398,621,663 u402,633,657 d409,633,663 u413,648,651 d420,633,651 u427,7,591,591,636,636 u434,8,564,564,591,606 u445,579,606 u451,549,567 u458,507,567 d462,507,537 u469,507,525 d474,495,525 u480,7,480,480,525,525 d494,12,495,495,636,636 d505,633,663 d509,663,690 d516,675,717 u521,705,747 d528,732,750 d532,747,762 d539,7,732,744,777,777 d543,759,819 u550,7,801,801,819,858 u557,747,804 u563,7,675,690,735,759 d570,675,720 d574,690,720 d581,7,732,732,834,834 u590,747,819 u595,747,777 u601,747,762 u606,717,750 d613,732,762 d617,747,762 u624,759,762 u628,759,789 d635,774,789 d639,774,792 d646,7,789,801,819,831 d655,789,819 u664,7,789,801,804,804 u673,6,705,705,792,792 u680,705,732 u684,705,717 d691,717,774 d696,747,750 d702,747,774 d707,747,777 u713,759,801 u718,747,762 u727,6,690,732,762,789 d736,747,762 d740,759,792 u747,759,792 d751,747,777 d758,7,759,759,834,834 u765,816,843 d772,816,858 u776,816,861 d789,16,858,858,945,957 u803,927,969 d809,7,927,942,987,987 u820,957,984 u823,7,927,927,987,987 d834,11,915,915,1029,1041 d843,1026,1086 u850,1011,1083 d856,7,999,1011,1086,1086 d864,1083,1098 d870,7,1095,1095,1140,1140 u877,1095,1125 u882,1068,1098 d888,1041,1071 u893,1041,1056 d899,1041,1083 d915,20,1083,1083,1128,1128 u948,33,1053,1095,1155,1389 u978,11,942,1011,1086,1086 u993,11,858,858,1002,1095 u1009,11,564,564,846,846 u1024,11,522,549,582,591 u1042,11,354,423,540,540 u1061,15,243,285,426,465 u1076,11,228,255,300,300 d1092,12,255,270,399,423 d1107,7,381,381,540,579 d1114,7,537,564,609,609 d1121,579,651 u1130,6,564,633,666,666 d1137,633,735 d1144,717,801 d1150,7,774,789,804,858 u1163,7,648,663,819,831 u1173,621,663 u1179,7,564,579,624,624 u1186,591,594 u1195,6,522,564,609,621 u1204,549,579 d1208,579,651 d1215,663,678 u1222,6,606,606,678,705 u1229,591,624 u1237,7,480,480,609,609 u1246,411,483` }
];
const vwap = [[58,305],[79,306],[118,313],[182,338],[256,359],[319,371],[326,378],[400,397],[440,406],[500,411],[550,411],[600,413],[660,421],[740,425],[830,430],[846,436],[900,444],[980,456],[1061,469],[1135,478],[1138,483],[1225,493],[1339,506],[1414,519],[1420,526],[1518,539],[1608,549],[1649,557],[1731,565],[1829,575],[1886,581],[1943,591],[1949,596],[1963,622],[2025,630],[2098,637]];
const volMa = [[58,1356],[100,1356],[144,1351],[165,1353],[215,1353],[255,1355],[272,1360],[290,1363],[310,1362],[325,1356],[371,1356],[376,1362],[410,1360],[435,1357],[450,1361],[550,1360],[590,1358],[630,1362],[700,1366],[750,1365],[775,1368],[820,1367],[843,1359],[880,1359],[886,1363],[950,1358],[977,1359],[985,1364],[1105,1366],[1140,1360],[1185,1359],[1200,1365],[1240,1367],[1300,1364],[1410,1362],[1418,1352],[1455,1352],[1460,1362],[1900,1364],[1922,1361],[1940,1365],[1950,1358],[1963,1335],[1985,1332],[2010,1328],[2038,1323],[2044,1353],[2075,1361],[2098,1362]];
const volumes = { 88: 48, 326: 59, 741: 27, 845: 63, 901: 20, 939: 36, 948: 25, 1022: 19, 1062: 18, 1085: 18, 1110: 38, 1141: 50, 1165: 26, 1418: 86, 1948: 55, 1977: 22, 1983: 15, 1990: 23, 1997: 22, 2005: 22, 2014: 28, 2020: 16, 2028: 27 };

const OX = 58, OY = 82;
const W = document.querySelector('.pane').clientWidth;
const H = document.querySelector('.pane').clientHeight;
const rect = (x, y, w, h, fill, extra = '') => `<rect x="${x}" y="${y}" width="${w}" height="${h}" fill="${fill}" ${extra}/>`;
const line = (x1, y1, x2, y2, c, extra = '') => `<path d="M${x1} ${y1}L${x2} ${y2}" stroke="${c}" fill="none" ${extra}/>`;
const text = (x, y, s, c = '', extra = '') => `<text x="${x}" y="${y}" ${c ? `style="fill:${c}"` : ''} ${extra}>${s}</text>`;
const priceY = p => 104.5 + (7420 - p) * 4.664;
const at = (pts, x) => {
  let i = 1;
  while (i < pts.length - 1 && pts[i][0] < x) i++;
  const [a, b] = [pts[i - 1], pts[i]];
  return a[1] + (b[1] - a[1]) * Math.min(1, Math.max(0, (x - a[0]) / (b[0] - a[0])));
};

const bars = [];
for (const s of segments) for (const t of s.bars.split(' ')) {
  const n = t.slice(1).split(',').map(Number);
  const q = n.length === 3 ? [0, n[1], n[1], n[2], n[2]] : n.slice(1);
  bars.push({
    up: t[0] === 'u', x: s.x + n[0] / s.sx, w: Math.max(1, Math.round(q[0] / s.sx)),
    wt: Math.round(s.y + q[1] / s.sy), bt: Math.round(s.y + q[2] / s.sy),
    bb: Math.round(s.y + q[3] / s.sy), wb: Math.round(s.y + q[4] / s.sy)
  });
}

const R = OX + W;
let o = rect(OX, OY, W, 1081, '#0b0203');
for (let p = 7420; p >= 7150; p -= 10) o += rect(OX, Math.round(priceY(p)), W, 1, '#ffffff', 'opacity=".07"');
bars.forEach((b, i) => {
  const base = b.w === 1 ? 3 + (i * 7 % 6) : b.w * 4 + (i * 5 % 7) - 2;
  const h = volumes[Math.round(b.x)] || base;
  if (b.w < 14) o += rect(Math.round(b.x - b.w / 2), OY + H - h, b.w, h, b.up ? '#0d2159' : '#26313f');
});
o += rect(1954, 1048, 17, OY + H - 1048, 'rgba(35,80,220,.4)');
o += `<polyline points="${volMa.join(' ')}" fill="none" stroke="#5c5520" stroke-dasharray="1 2"/>`;
bars.forEach((b, i) => {
  const bright = b.x > 850 || (b.x > 334 && b.x < 356) || (b.x > 394 && b.x < 422);
  o += `<circle cx="${b.x}" cy="655.500" r="2.500" fill="${bright ? '#1c9a9c' : '#1f7481'}"/><circle cx="${b.x}" cy="1261" r="2.500" fill="#aaa"/>`;
  const c = b.up ? '#12927b' : '#f63747', x = Math.round(b.x - .5);
  o += rect(x, b.wt, 1, Math.max(1, b.wb - b.wt), c) + rect(Math.round(b.x - b.w / 2), b.bt, b.w, Math.max(1, b.bb - b.bt), c);
  const v = Math.round(at(vwap, b.x));
  if (i > 3) o += rect(x - 1, v, 3, 1, '#2f5bf5') + rect(x, v - 1, 1, 3, '#2f5bf5');
});
o += rect(OX, 398, W, 443, 'rgba(242,54,69,.1)');
o += rect(OX, 397, W, 2, '#c5803a');
o += line(1952, 1061.5, R, 1061.5, '#ada028') + line(1971, 1084.5, R, 1084.5, '#b8282f');
o += line(1628, 984.5, 2106, 984.5, '#ff9800');
const box = (x, y, w, h) => rect(x + .5, y + .5, w, h, 'rgba(255,152,0,.2)', 'stroke="#ff9800"');
o += box(50, 380, 635, 23) + box(144, 509, 475, 9) + box(289, 609, 556, 15) + box(378, 719, 1707, 6);
// long / short positions
const g = 'rgba(76,175,80,.15)', r = 'rgba(233,30,99,.18)';
o += rect(541, OY, 120, 316, g) + rect(541, 398, 120, 319, r) + rect(548, 398, 113, 182, 'rgba(233,30,99,.15)') + rect(541, 397, 120, 2, '#a5606c');
o += rect(666, 398, 152, 206, g) + rect(673, 534, 145, 70, 'rgba(76,175,80,.1)') + rect(666, 604, 152, 89, r) + rect(666, 604, 152, 1, '#8d7480');
o += rect(2053, 716, 151, 270, g) + rect(2053, 841, 151, 145, 'rgba(76,175,80,.18)') + rect(2053, 986, 151, 34, r) + rect(2053, 986, 151, 1, '#8d8a90');
const dash = 'stroke-dasharray="5 6"';
o += line(548, 398, 658, 579, '#8d6f7a', dash) + line(651, 577, 658, 579, '#8d6f7a') + line(660, 571, 658, 579, '#8d6f7a');
o += line(673, 604, 814, 534, '#8d7f80', dash) + line(808, 530, 815, 534, '#8d7f80') + line(815, 534, 812, 541, '#8d7f80');
o += line(2053, 984, 2096, 844, '#77867a', dash) + line(2090, 846, 2096, 843, '#77867a') + line(2096, 843, 2100, 849, '#77867a');
o += line(OX, 543.5, 2098, 543.5, '#a89a50', dash);
o += line(OX, 923.5, R - 21, 923.5, '#788593', dash) + line(2264.5, OY, 2264.5, OY + H, '#788593', dash);
const arrow = (x, y, d) => `<path d="M${x} ${y}l4 ${5 * d}h-3v${11 * d}h-2v${-11 * d}h-3z" fill="#56a84f"/>`;
o += arrow(426.5, 750, 1) + arrow(1892.5, 962, -1) + arrow(2059.5, 1002, 1);
// labels at the right edge of the pane
const edge = (w, y, s, bg, c, h = 17) => rect(R - w, Math.round(y - h / 2), w, h, bg, 'rx="1"') + text(R - w / 2, y + 4, s, c);
o += edge(38, 636, 'VWAP', '#4459e0', '#e8dcf0') + edge(60, 655, 'week :HH', '#24dfe6', '#12343a');
o += edge(73, 1261, 'week :w_op', '#fff', '#111') + edge(67, 1363, 'Volume MA', '#ffeb3b', '#222');
o += rect(R - 21, 913, 21, 21, '#363a45', 'rx="1"') + `<circle cx="${R - 11}" cy="923.500" r="7.500" fill="none" stroke="#ddd"/><path d="M${R - 15} 923.500h8M${R - 11} 919.500v8" stroke="#ddd"/>`;
document.getElementById('plot').innerHTML = `<g transform="translate(${-OX} ${-OY})">${o}</g>`;

// price axis
let a = '';
for (let p = 7420; p >= 7160; p -= 10) if (p !== 7230) a += text(23, Math.round(priceY(p)) + 3, p.toLocaleString('en-US'));
const tag = (y, s, bg, c = '#fff', h = 17, w = 43) => rect(0, Math.round(y - h / 2), w, h, bg, 'rx="1"') + text(23, y + 4, s, c);
a += tag(398, '7,357', '#4caf50') + tag(604, '7,313', '#787b86') + tag(636, '7,306', '#2962ff') + tag(655, '7,302', '#00ffff', '#111');
a += tag(692, '7,294', '#e91e63') + tag(716, '7,289', '#4caf50') + tag(841, '00:02', '#ffeb3b', '#665e18') + tag(923, '7,245', '#363a45', '#fff', 21);
a += tag(986, '7,231', '#787b86') + tag(1019, '7,224', '#e91e63') + tag(1261, '7,172', '#fff', '#111') + tag(1363, '6.85 K', '#ffeb3b', '#222', 17, 46);
document.getElementById('prices').innerHTML = `<g transform="translate(0 ${-OY})">${a}</g>`;

// time axis
const times = [[88,'09:15'],[206,'09:20'],[294,'09:25'],[378,'09:30'],[466,'09:35'],[541,'09:40'],[625,'09:45'],[694,'09:50'],[754,'09:55'],[804,'10:00',1],[877,'10:05'],[962,'10:10'],[1023,'10:15'],[1085,'10:20'],[1160,'10:25'],[1220,'10:30'],[1275,'10:35'],[1341,'10:40'],[1406,'10:45'],[1478,'10:50'],[1536,'10:55'],[1591,'11:00',1],[1655,'11:05'],[1707,'11:10'],[1776,'11:15'],[1841,'11:20'],[1901,'11:25'],[1963,'12:30',1],[2073,'12:35'],[2134,'12:40'],[2193,'12:45'],[2366,'13:00',1],[2423,'13:05']];
let t = times.map(([x, s, b]) => text(x - OX, 17, s, b ? '#f0f0f0' : '', b ? 'font-weight="600"' : '')).join('');
t += rect(2198 - OX, 0, 134, 24, '#363a45', 'rx="1"') + text(2236 - OX, 17, '5月 21 (木)', '#fff') + text(2300 - OX, 17, '12:51:15', '#fff');
document.getElementById('times').innerHTML = t;
```
